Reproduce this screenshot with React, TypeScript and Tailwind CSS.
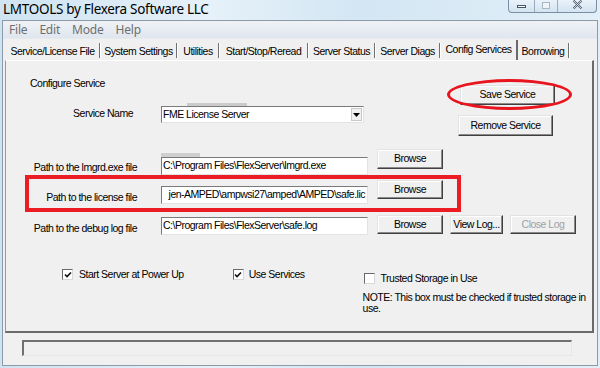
import React from "react";

const ui = "font-['Liberation_Sans',Arial,sans-serif] text-[10.5px] tracking-[-0.5px] text-black";

const Btn = ({ label, className = "", disabled = false }: { label: string; className?: string; disabled?: boolean }) => (
  <div
    className={`flex items-center justify-center bg-[#f0f0f0] border border-t-[#e3e3e3] border-l-[#e3e3e3] border-b-[#404040] border-r-[#404040] shadow-[inset_-1px_-1px_0_#8a8a8a,inset_1px_1px_0_#ffffff] ${
      disabled ? "text-[#a0a0a0]" : "text-black"
    } ${className}`}
  >
    {label}
  </div>
);

const Field = ({ value, right = false }: { value: string; right?: boolean }) => (
  <div
    className={`flex h-full w-full items-center overflow-hidden whitespace-nowrap bg-white border border-t-[#7a7a7a] border-l-[#7a7a7a] border-b-[#e3e3e3] border-r-[#e3e3e3] pl-[1px] ${
      right ? "justify-end pr-[2px]" : ""
    }`}
  >
    <span className="shrink-0">{value}</span>
  </div>
);

const Check = ({ checked }: { checked: boolean }) => (
  <div className="flex h-[11px] w-[11px] shrink-0 items-center justify-center bg-white border border-t-[#6a6a6a] border-l-[#6a6a6a] border-b-[#d8d8d8] border-r-[#d8d8d8]">
    {checked && (
      <svg width="8" height="8" viewBox="0 0 8 8">
        <path d="M1 3.5 L3 5.5 L7 1.5" fill="none" stroke="#111" strokeWidth="1.6" />
      </svg>
    )}
  </div>
);

const tabs = [
  { label: "Service/License File", w: "w-[95px]" },
  { label: "System Settings", w: "w-[77px]" },
  { label: "Utilities", w: "w-[42px]" },
  { label: "Start/Stop/Reread", w: "w-[89px]" },
  { label: "Server Status", w: "w-[67px]" },
  { label: "Server Diags", w: "w-[65px]" },
  { label: "Config Services", w: "w-[77px]", active: true },
  { label: "Borrowing", w: "w-[52px]" },
];

export default function App() {
  return (
    <div className="w-[600px] h-[368px] overflow-hidden bg-[linear-gradient(90deg,#cfe3f1,#e6f1f9_35%,#d3e6f3_60%,#e2eff8)]">
      {/* title bar */}
      <div className="flex h-[20px] items-start justify-between">
        <div className="pl-[3px] pt-[1px] font-['Noto_Sans',sans-serif] text-[13.5px] leading-[16px] tracking-[-0.3px] text-black">
          LMTOOLS by Flexera Software LLC
        </div>
        <div className="mr-[3px] flex h-[13px] w-[89px] rounded-b-[4px] border border-t-0 border-[#7d8ea3] bg-[linear-gradient(#e9f2fa,#d3e3f0)]">
          <div className="flex w-[26px] items-start justify-center border-r border-[#9aabbf] pt-[5px]">
            <div className="h-[3px] w-[9px] border border-[#44546a] bg-white" />
          </div>
          <div className="flex w-[23px] items-start justify-center border-r border-[#9aabbf] pt-[2px]">
            <div className="h-[7px] w-[8px] border border-[#a9b6c6] bg-[#eef3f8]" />
          </div>
          <div className="flex flex-1 items-start justify-center">
            <svg width="11" height="9" viewBox="0 0 11 9">
              <path d="M1.5 0.5 L9.5 8.5 M9.5 0.5 L1.5 8.5" stroke="#4c5c70" strokeWidth="2" />
              <path d="M1.5 0.5 L9.5 8.5 M9.5 0.5 L1.5 8.5" stroke="#ffffff" strokeWidth="0.7" />
            </svg>
          </div>
        </div>
      </div>

      {/* client area */}
      <div className={`mx-[2px] h-[346px] border border-[#8d9aaa] bg-[#f0f0f0] ${ui}`}>
        {/* menu */}
        <div className="mt-[1px] flex h-[17px] items-center gap-[12px] border-b border-[#e6e9ee] bg-[linear-gradient(#eef2f7,#e0e6ee)] pl-[6px] font-['Noto_Sans',sans-serif] text-[12px] tracking-[-0.2px] text-[#6f6f6f]">
          <span>File</span>
          <span>Edit</span>
          <span>Mode</span>
          <span>Help</span>
        </div>

        {/* tabs */}
        <div className="flex h-[21px] items-end pl-[3px]">
          {tabs.map((t) =>
            t.active ? (
              <div
                key={t.label}
                className={`${t.w} flex h-[20px] items-start justify-center border-r-2 border-[#6a6a6a] pt-[2px]`}
              >
                {t.label}
              </div>
            ) : (
              <div key={t.label} className={`${t.w} flex h-[17px] items-start`}>
                <div className="flex flex-1 justify-center pt-[1px]">{t.label}</div>
                <div className="h-[15px] w-[2px] border-l border-[#707070] bg-white" />
              </div>
            )
          )}
        </div>

        {/* panel */}
        <div className="ml-[2px] mr-[3px] h-[273px] border-l border-t border-r-2 border-b-2 border-l-[#9a9a9a] border-t-white border-r-[#6a6a6a] border-b-[#6a6a6a]">
          {/* configure service + buttons */}
          <div className="flex h-[79px]">
            <div className="w-[452px]">
              <div className="pl-[24px] pt-[16px] leading-[13px]">Configure Service</div>
              <div className="mt-[13px] flex">
                <div className="w-[127px] pt-[4px] text-right leading-[13px]">Service Name</div>
                <div className="ml-[28px] w-[203px]">
                  <div className="ml-[26px] h-[3px] w-[60px] bg-[#cbcbcb]" />
                  <div className="flex h-[17px] items-center justify-between bg-white border border-t-[#7a7a7a] border-l-[#7a7a7a] border-b-[#e3e3e3] border-r-[#e3e3e3] pl-[1px] pr-[1px]">
                    <span>FME License Server</span>
                    <div className="flex h-[13px] w-[11px] items-center justify-center bg-[#f0f0f0] border border-[#c9c9c9]">
                      <svg width="7" height="4" viewBox="0 0 7 4">
                        <path d="M0 0 H7 L3.5 4 Z" fill="#000" />
                      </svg>
                    </div>
                  </div>
                </div>
              </div>
            </div>
            <div className="pt-[24px]">
              <div className="relative ml-[2px]">
                <Btn label="Save Service" className="h-[20px] w-[95px]" />
                <div className="absolute left-[-13px] top-[-6px] h-[31px] w-[125px] rounded-[50%] border-[3px] border-[#e8141e]" />
              </div>
              <Btn label="Remove Service" className="mt-[10px] h-[21px] w-[95px]" />
            </div>
          </div>

          {/* lmgrd row */}
          <div className="mt-[9px] flex h-[26px] items-start">
            <div className="w-[131px] pt-[12px] text-right leading-[13px]">Path to the lmgrd.exe file</div>
            <div className="ml-[24px] w-[207px]">
              <div className="mt-[4px] h-[4px] w-[39px] bg-[#cfcfcf]" />
              <div className="h-[18px]">
                <Field value={"C:\\Program Files\\FlexServer\\lmgrd.exe"} />
              </div>
            </div>
            <Btn label="Browse" className="ml-[9px] h-[20px] w-[66px]" />
          </div>

          {/* license row, highlighted */}
          <div className="ml-[19px] h-[37px] w-[436px] border-4 border-[#ec1c24]">
            <div className="flex items-start">
              <div className="w-[108px] pt-[12px] text-right leading-[13px]">Path to the license file</div>
              <div className="ml-[24px] mt-[7px] h-[18px] w-[207px]">
                <Field value={"jen-AMPED\\ampwsi27\\amped\\AMPED\\safe.lic"} right />
              </div>
              <Btn label="Browse" className="ml-[9px] mt-[1px] h-[19px] w-[66px]" />
            </div>
          </div>

          {/* debug log row */}
          <div className="mt-[3px] flex items-start">
            <div className="w-[131px] pt-[7px] text-right leading-[13px]">Path to the debug log file</div>
            <div className="ml-[24px] mt-[2px] h-[18px] w-[207px]">
              <Field value={"C:\\Program Files\\FlexServer\\safe.log"} />
            </div>
            <Btn label="Browse" className="ml-[9px] h-[19px] w-[66px]" />
            <Btn label="View Log..." className="ml-[7px] h-[19px] w-[53px]" />
            <Btn label="Close Log" className="ml-[7px] h-[19px] w-[66px]" disabled />
          </div>

          {/* options */}
          <div className="mt-[33px] flex items-start">
            <div className="ml-[56px] flex items-center gap-[6px]">
              <Check checked />
              <span className="leading-[13px]">Start Server at Power Up</span>
            </div>
            <div className="ml-[49px] flex items-center gap-[5px]">
              <Check checked />
              <span className="leading-[13px]">Use Services</span>
            </div>
            <div className="ml-[58px] pt-[4px]">
              <div className="ml-[1px] flex items-center gap-[6px]">
                <Check checked={false} />
                <span className="leading-[13px]">Trusted Storage in Use</span>
              </div>
              <div className="mt-[7px] whitespace-nowrap leading-[11px]">
                NOTE: This box must be checked if trusted storage in
                <br />
                use.
              </div>
            </div>
          </div>
        </div>

        {/* status bar */}
        <div className="ml-[19px] mt-[7px] h-[16px] w-[550px] border-t-2 border-l-2 border-b border-r border-t-[#707070] border-l-[#707070] border-b-[#e6e6e6] border-r-[#e6e6e6]" />
      </div>
    </div>
  );
}
